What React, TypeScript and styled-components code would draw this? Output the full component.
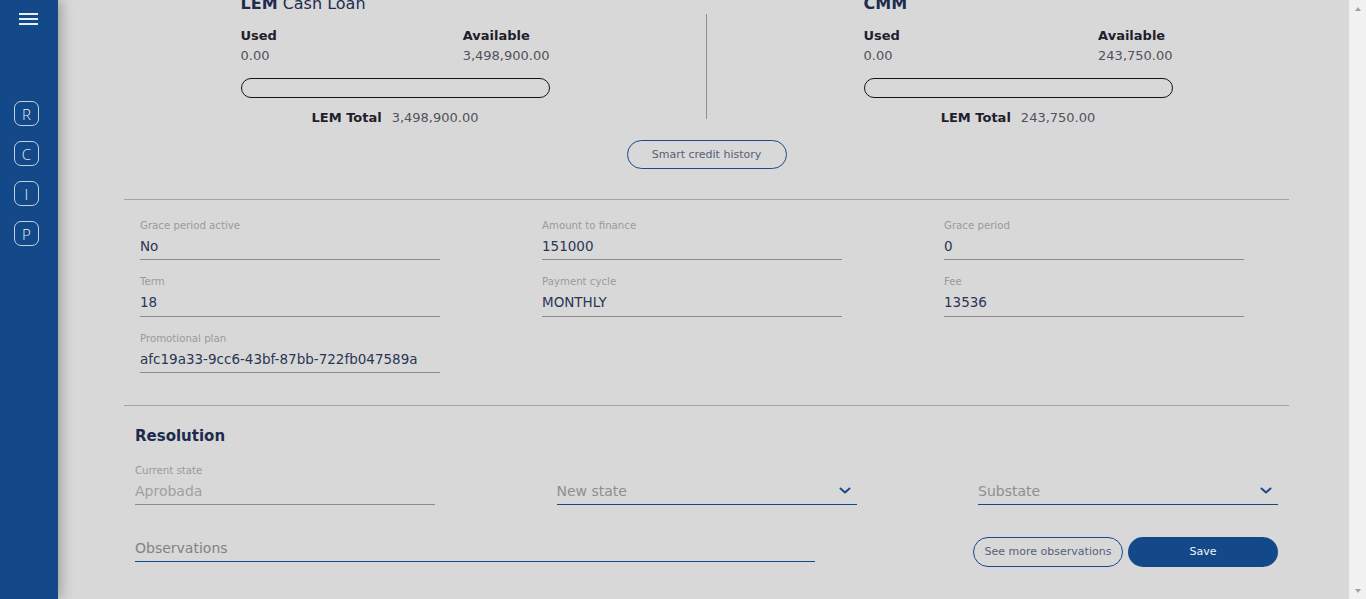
import React, { useLayoutEffect, useRef } from "react";
import styled, { createGlobalStyle } from "styled-components";

const GlobalStyle = createGlobalStyle`
  body {
    margin: 0;
    background: #d8d8d8;
    font-family: "DejaVu Sans", "Liberation Sans", sans-serif;
    overflow: hidden;
  }
  * { box-sizing: border-box; }
`;

const Shell = styled.div`
  display: flex;
  height: 100vh;
`;

const Sidebar = styled.aside`
  width: 58px;
  flex: none;
  background: #134989;
  box-shadow: 3px 0 12px rgba(0, 0, 0, 0.28);
  z-index: 1;
  display: flex;
  flex-direction: column;
  align-items: flex-start;
  padding: 13px 0 0 14px;
`;

const Burger = styled.button`
  border: none;
  background: none;
  padding: 0;
  margin-left: 5px;
  width: 19px;
  height: 12px;
  display: block;
  cursor: pointer;
`;

const NavList = styled.nav`
  display: flex;
  flex-direction: column;
  gap: 15px;
  margin-top: 76px;
`;

const NavBox = styled.div`
  width: 25px;
  height: 25px;
  border: 1.5px solid rgba(214, 224, 238, 0.9);
  border-radius: 7px;
  color: #e9eef6;
  font-family: "Open Sans", sans-serif;
  font-weight: 300;
  font-size: 15px;
  display: flex;
  align-items: center;
  justify-content: center;
`;

const Main = styled.main`
  flex: 1;
  overflow-y: auto;
  scrollbar-width: none;
  &::-webkit-scrollbar { display: none; }
`;

const ScrollTrack = styled.div`
  width: 17px;
  flex: none;
  background: #f1f1f1;
  display: flex;
  flex-direction: column;
  justify-content: space-between;
  align-items: center;
  padding: 7px 0 6px;
`;

const Arrow = styled.span<{ $down?: boolean }>`
  width: 0;
  height: 0;
  border-left: 3.5px solid transparent;
  border-right: 3.5px solid transparent;
  ${(p) =>
    p.$down ? "border-top: 4px solid #a3a3a3;" : "border-bottom: 4px solid #a3a3a3;"}
`;

const Content = styled.div`
  padding: 24px 60px 40px 66px;
`;

const CreditGrid = styled.section`
  display: grid;
  grid-template-columns: 309px 1px 309px;
  column-gap: 156.5px;
  justify-content: center;
`;

const CreditCol = styled.div`
  display: flex;
  flex-direction: column;
`;

const CreditTitle = styled.h2`
  margin: 0;
  font-size: 16px;
  line-height: 20px;
  font-weight: 400;
  color: #1c2d4f;
  b { font-weight: 700; }
`;

const StatsRow = styled.div`
  display: flex;
  justify-content: space-between;
  margin-top: 12.5px;
`;

const Stat = styled.div`
  display: flex;
  flex-direction: column;
  gap: 2px;
`;

const StatLabel = styled.span`
  font-size: 13px;
  line-height: 18px;
  font-weight: 700;
  color: #1f202b;
`;

const StatValue = styled.span`
  font-size: 13px;
  line-height: 18px;
  color: #52525c;
`;

const Bar = styled.div`
  margin-top: 13px;
  height: 20px;
  border: 1px solid #151515;
  border-radius: 10px;
`;

const TotalRow = styled.div`
  margin-top: 11.5px;
  display: flex;
  justify-content: center;
  gap: 10px;
  font-size: 13px;
  line-height: 18px;
  color: #52525c;
  b { font-weight: 700; color: #1f202b; }
`;

const VDivider = styled.div`
  background: #8d8d8d;
  margin: 19.5px 0 8.5px;
`;

const Center = styled.div`
  display: flex;
  justify-content: center;
  margin-top: 12.5px;
`;

const OutlineButton = styled.button<{ $w: number; $h: number }>`
  width: ${(p) => p.$w}px;
  height: ${(p) => p.$h}px;
  border: 1px solid #1a4a8a;
  border-radius: 15px;
  background: transparent;
  font-family: inherit;
  font-size: 11px;
  color: #56607a;
  padding: 0;
  cursor: pointer;
`;

const Separator = styled.hr<{ $mt?: number }>`
  border: none;
  height: 1px;
  background: #a3a3a3;
  margin: ${(p) => p.$mt ?? 0}px 0 0;
`;

const FieldsGrid = styled.section`
  display: grid;
  grid-template-columns: repeat(3, 300px);
  column-gap: 102px;
  row-gap: 16px;
  padding: 20px 16px 32px;
`;

const Field = styled.div`
  border-bottom: 1px solid #8c8c8c;
`;

const FieldLabel = styled.div`
  font-size: 10.2px;
  line-height: 12px;
  color: #9a9a9a;
`;

const FieldValue = styled.div<{ $muted?: boolean }>`
  font-size: ${(p) => (p.$muted ? 14 : 13.5)}px;
  line-height: 20px;
  padding: 4px 0 3.5px;
  color: ${(p) => (p.$muted ? "#9f9f9f" : "#2a3654")};
`;

const Resolution = styled.section`
  padding: 19.5px 11px 0;
`;

const ResTitle = styled.h3`
  margin: 0;
  font-size: 15px;
  line-height: 20px;
  font-weight: 700;
  color: #1c2b4d;
`;

const ResRow = styled.div`
  display: grid;
  grid-template-columns: repeat(3, 300px);
  column-gap: 121.5px;
  align-items: end;
  margin-top: 19px;
`;

const Select = styled.div`
  display: flex;
  align-items: center;
  justify-content: space-between;
  border-bottom: 1px solid #134989;
  padding: 4px 6px 3.5px 0;
  font-size: 14px;
  line-height: 20px;
  color: #8e8e8e;
`;

const ActionRow = styled.div`
  display: flex;
  align-items: flex-start;
  margin-top: 31.5px;
`;

const Observations = styled.div`
  width: 680px;
  border-bottom: 1px solid #134989;
  padding: 1px 0 3.5px;
  font-size: 14px;
  line-height: 20px;
  color: #828282;
`;

const Buttons = styled.div`
  margin-left: auto;
  display: flex;
  gap: 5px;
`;

const SaveButton = styled.button`
  width: 150px;
  height: 30px;
  border: none;
  border-radius: 15px;
  background: #134989;
  color: #f2f5fa;
  font-family: inherit;
  font-size: 11px;
  cursor: pointer;
`;

const Chevron = () => (
  <svg width="12" height="8" viewBox="0 0 12 8" aria-hidden>
    <polyline points="1.5,1.5 6,5.5 10.5,1.5" fill="none" stroke="#1a4a8a" strokeWidth="2" strokeLinecap="round" strokeLinejoin="round" />
  </svg>
);

const fields = [
  ["Grace period active", "No"],
  ["Amount to finance", "151000"],
  ["Grace period", "0"],
  ["Term", "18"],
  ["Payment cycle", "MONTHLY"],
  ["Fee", "13536"],
  ["Promotional plan", "afc19a33-9cc6-43bf-87bb-722fb047589a"],
];

const credits = [
  { bold: "LEM", rest: " Cash Loan", used: "0.00", available: "3,498,900.00", total: "3,498,900.00" },
  { bold: "CMM", rest: "", used: "0.00", available: "243,750.00", total: "243,750.00" },
];

const CreditBlock = ({ c }: { c: (typeof credits)[number] }) => (
  <CreditCol>
    <CreditTitle>
      <b>{c.bold}</b>
      {c.rest}
    </CreditTitle>
    <StatsRow>
      <Stat>
        <StatLabel>Used</StatLabel>
        <StatValue>{c.used}</StatValue>
      </Stat>
      <Stat>
        <StatLabel>Available</StatLabel>
        <StatValue>{c.available}</StatValue>
      </Stat>
    </StatsRow>
    <Bar />
    <TotalRow>
      <b>LEM Total</b>
      <span>{c.total}</span>
    </TotalRow>
  </CreditCol>
);

export default function App() {
  const mainRef = useRef<HTMLElement>(null);
  useLayoutEffect(() => {
    if (mainRef.current) mainRef.current.scrollTop = 30;
  }, []);

  return (
    <>
      <GlobalStyle />
      <Shell>
        <Sidebar>
          <Burger aria-label="menu">
            <svg width="19" height="12" viewBox="0 0 19 12">
              <rect x="0" y="0" width="19" height="2" fill="#e8eef6" />
              <rect x="0" y="5" width="19" height="2" fill="#e8eef6" />
              <rect x="0" y="10" width="19" height="2" fill="#e8eef6" />
            </svg>
          </Burger>
          <NavList>
            {["R", "C", "I", "P"].map((l) => (
              <NavBox key={l}>{l}</NavBox>
            ))}
          </NavList>
        </Sidebar>
        <Main ref={mainRef}>
          <Content>
            <CreditGrid>
              <CreditBlock c={credits[0]} />
              <VDivider />
              <CreditBlock c={credits[1]} />
            </CreditGrid>
            <Center>
              <OutlineButton $w={160} $h={29}>Smart credit history</OutlineButton>
            </Center>
            <Separator $mt={30} />
            <FieldsGrid>
              {fields.map(([label, value]) => (
                <Field key={label}>
                  <FieldLabel>{label}</FieldLabel>
                  <FieldValue>{value}</FieldValue>
                </Field>
              ))}
            </FieldsGrid>
            <Separator />
            <Resolution>
              <ResTitle>Resolution</ResTitle>
              <ResRow>
                <Field>
                  <FieldLabel>Current state</FieldLabel>
                  <FieldValue $muted>Aprobada</FieldValue>
                </Field>
                <Select>
                  <span>New state</span>
                  <Chevron />
                </Select>
                <Select>
                  <span>Substate</span>
                  <Chevron />
                </Select>
              </ResRow>
              <ActionRow>
                <Observations>Observations</Observations>
                <Buttons>
                  <OutlineButton $w={150} $h={30}>See more observations</OutlineButton>
                  <SaveButton>Save</SaveButton>
                </Buttons>
              </ActionRow>
            </Resolution>
          </Content>
        </Main>
        <ScrollTrack aria-hidden>
          <Arrow />
          <Arrow $down />
        </ScrollTrack>
      </Shell>
    </>
  );
}
